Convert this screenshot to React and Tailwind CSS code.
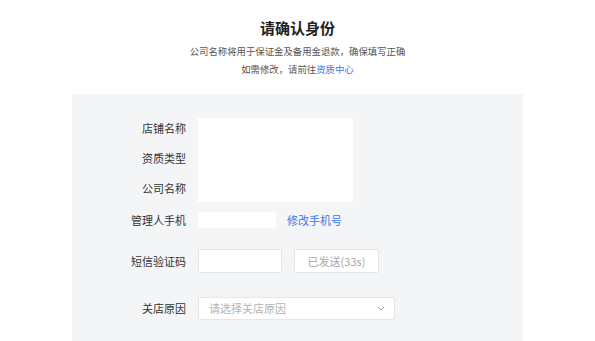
import React from "react";

export default function App() {
  return (
    <div
      className="w-[595px] h-[341px] overflow-hidden bg-white text-[#333]"
      style={{ fontFamily: '"Noto Sans CJK SC", "Noto Sans", sans-serif' }}
    >
      <div className="pt-[18px] flex flex-col items-center">
        <div className="text-[15px] leading-[20px] font-bold text-[#222]">请确认身份</div>
        <div className="mt-[4px] text-[9.4px] leading-[18px] text-[#555] text-center">
          <div>公司名称将用于保证金及备用金退款，确保填写正确</div>
          <div>
            如需修改，请前往<span className="text-[#3a77f0]">资质中心</span>
          </div>
        </div>
      </div>
      <div className="ml-[72px] mt-[16px] w-[451px] h-[260px] bg-[#f4f5f7] pt-[19px] text-[11px]">
        <div className="flex gap-3">
          <div className="w-[114px] flex flex-col">
            <div className="h-[30px] flex items-center justify-end">店铺名称</div>
            <div className="h-[30px] flex items-center justify-end">资质类型</div>
            <div className="h-[30px] flex items-center justify-end">公司名称</div>
          </div>
          <div className="mt-[5px] w-[155px] h-[84px] bg-white"></div>
        </div>
        <div className="flex gap-3 h-[34px] items-center">
          <div className="w-[114px] text-right">管理人手机</div>
          <div className="w-[78px] h-[16px] bg-white"></div>
          <div className="ml-[-1px] text-[#3a77f0]">修改手机号</div>
        </div>
        <div className="flex gap-3 h-[48px] items-center">
          <div className="w-[114px] text-right">短信验证码</div>
          <div className="w-[84px] h-[24px] bg-white border border-[#e4e6ea] rounded-[2px]"></div>
          <div className="w-[85px] h-[24px] bg-white border border-[#e4e6ea] rounded-[2px] flex items-center justify-center text-[#a8a8a8]">
            已发送(33s)
          </div>
        </div>
        <div className="flex gap-3 h-[46px] items-center">
          <div className="w-[114px] text-right">关店原因</div>
          <div className="w-[197px] h-[23px] bg-white border border-[#e4e6ea] rounded-[2px] flex items-center justify-between pl-[10px] pr-[9px] text-[#b3b3b3]">
            <span>请选择关店原因</span>
            <svg width="8" height="5" viewBox="0 0 8 5" fill="none">
              <path d="M0.8 0.8 L4 4 L7.2 0.8" stroke="#9a9a9a" strokeWidth="1" />
            </svg>
          </div>
        </div>
      </div>
    </div>
  );
}
